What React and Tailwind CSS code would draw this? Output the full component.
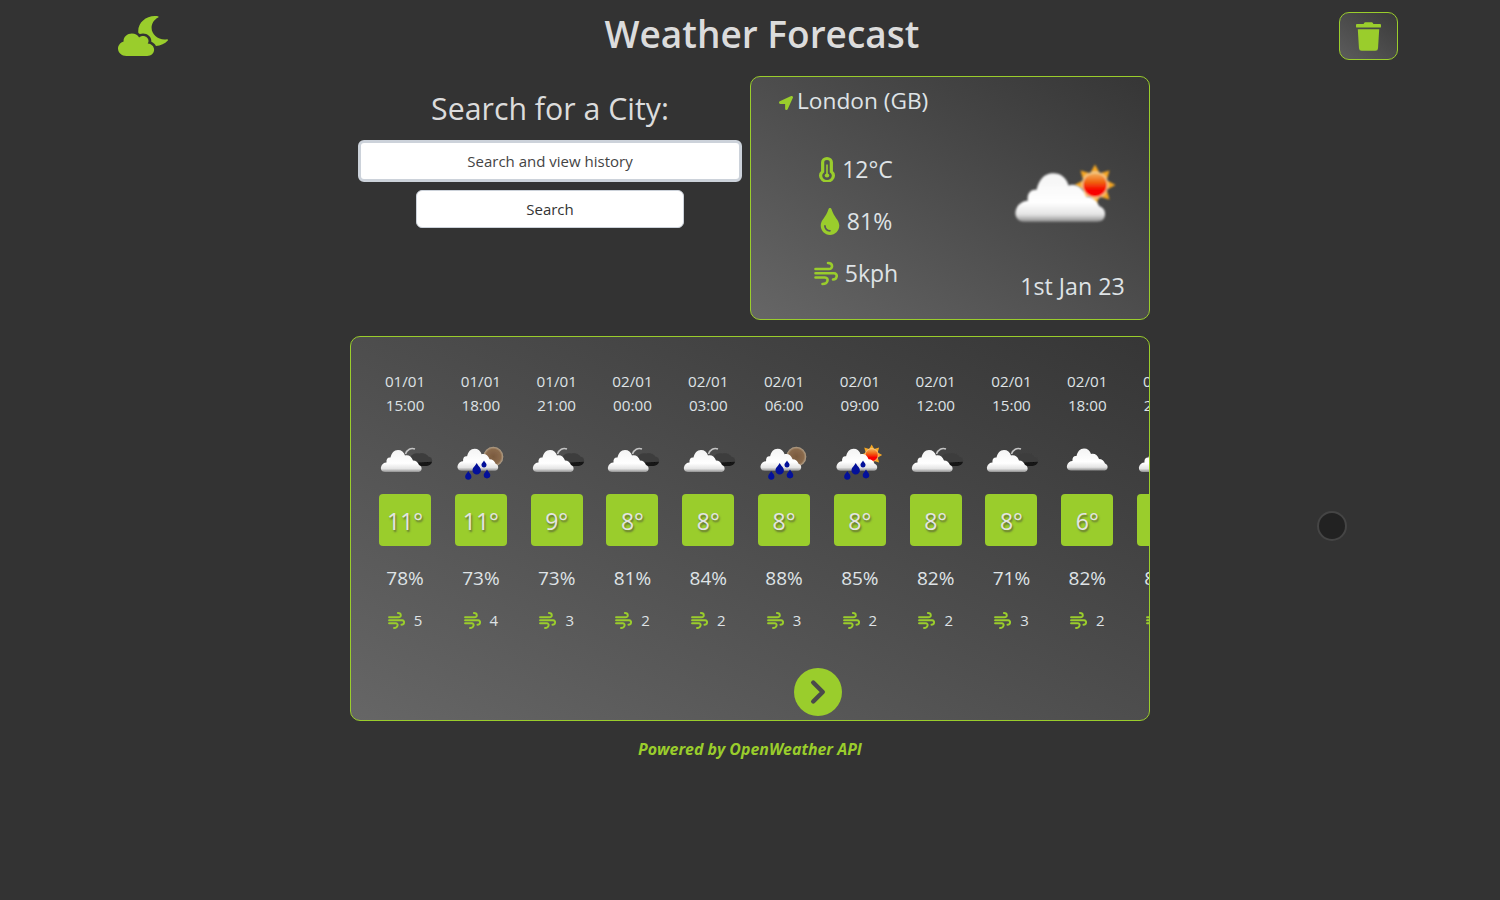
import { FaCloudMoon, FaTrash, FaLocationArrow, FaTint } from "react-icons/fa";
import { ChevronRight } from "lucide-react";

const rows = [
  ["01/01", "15:00", "night", "11°", "78%", "5"],
  ["01/01", "18:00", "rainMoon", "11°", "73%", "4"],
  ["01/01", "21:00", "night", "9°", "73%", "3"],
  ["02/01", "00:00", "night", "8°", "81%", "2"],
  ["02/01", "03:00", "night", "8°", "84%", "2"],
  ["02/01", "06:00", "rainMoon", "8°", "88%", "3"],
  ["02/01", "09:00", "rainSun", "8°", "85%", "2"],
  ["02/01", "12:00", "night", "8°", "82%", "2"],
  ["02/01", "15:00", "night", "8°", "71%", "3"],
  ["02/01", "18:00", "cloud", "6°", "82%", "2"],
  ["02/01", "21:00", "night", "6°", "83%", "2"],
];

const CLOUD =
  "M10 31 C6.5 31 5.5 28 6 26 C6.5 23.5 9 21.5 11.5 21.5 C11 18 13 16 15.5 16.5 C16.5 12 19 9 23 9 C26.5 9 29 11 30 14.5 C33 13.5 36.5 15 38 19.5 C41 19.5 43 21.5 44 24 C46 24.5 47 26.5 46.5 28.5 C46 30.5 44.5 31 42 31 Z";

function Defs() {
  return (
    <defs>
      <linearGradient id="cloudFill" x1="0" y1="0" x2="0" y2="1">
        <stop offset="0" stopColor="#f4f4f4" />
        <stop offset="0.6" stopColor="#ffffff" />
        <stop offset="0.85" stopColor="#e4e4e4" />
        <stop offset="1" stopColor="#909090" />
      </linearGradient>
      <linearGradient id="sunFill" x1="0" y1="0" x2="0" y2="1">
        <stop offset="0" stopColor="#f4b860" />
        <stop offset="0.4" stopColor="#f06010" />
        <stop offset="0.7" stopColor="#f80000" />
        <stop offset="1" stopColor="#f80000" />
      </linearGradient>
      <radialGradient id="moonFill">
        <stop offset="0" stopColor="#7a5a3e" />
        <stop offset="0.75" stopColor="#8a6a4c" />
        <stop offset="1" stopColor="#b8a68e" />
      </radialGradient>
      <filter id="soft" x="-10%" y="-10%" width="120%" height="120%">
        <feGaussianBlur stdDeviation="0.5" />
      </filter>
    </defs>
  );
}

const rays = (cx, cy, inner, outer, n) => {
  const p = [];
  for (let i = 0; i < n * 2; i++) {
    const r = i % 2 ? inner : outer;
    const a = (Math.PI * i) / n - Math.PI / 2;
    p.push(`${(cx + r * Math.cos(a)).toFixed(2)},${(cy + r * Math.sin(a)).toFixed(2)}`);
  }
  return p.join(" ");
};

function Sun({ cx, cy }) {
  return (
    <g filter="url(#soft)">
      <polygon points={rays(cx, cy, 6.5, 10.5, 8)} fill="#f5a623" />
      <circle cx={cx} cy={cy} r="6.5" fill="url(#sunFill)" stroke="#f3d9a0" strokeWidth="0.6" />
    </g>
  );
}

function Drops() {
  const d = [
    [17.3, 34.5, 1.05],
    [25.7, 28, 1.4],
    [36, 33, 1.1],
    [33, 23, 0.85],
  ];
  return d.map(([x, y, s], i) => (
    <path
      key={i}
      d={`M${x} ${y - 4.2 * s} C${x + 1 * s} ${y - 2 * s} ${x + 3 * s} ${y - 1 * s} ${x + 3 * s} ${y + 1 * s} A${3 * s} ${3 * s} 0 0 1 ${x - 3 * s} ${y + 1 * s} C${x - 3 * s} ${y - 1 * s} ${x - 1 * s} ${y - 2 * s} ${x} ${y - 4.2 * s} Z`}
      fill="#03109a"
    />
  ));
}

function WeatherIcon({ kind, className }) {
  const rain = kind === "rainMoon" || kind === "rainSun";
  return (
    <svg viewBox="0 0 60 40" className={className}>
      <Defs />
      {kind === "night" && (
        <g filter="url(#soft)">
          <path d="M30.5 13 C32 8.5 36 6.5 40 8" fill="none" stroke="#c4c4c4" strokeWidth="1.5" />
          <path d="M35 18 C35 14.5 39 11.5 44 12.5 C47 11 51.5 12.5 53.5 15.5 C56.5 16 57.5 18.5 57 21 C56.5 23.5 54 25 50 25 L40 25 C37 25 35 21.5 35 18 Z" fill="#3e3e3e" />
          <path d="M39 21.8 L57 20.8 C56.5 23.5 54 25 50 25 L41 25 Z" fill="#121212" />
        </g>
      )}
      {kind === "rainMoon" && <circle cx="42.3" cy="15.7" r="10" fill="url(#moonFill)" filter="url(#soft)" />}
      {kind === "rainSun" && <Sun cx={41.7} cy={14} />}
      <path
        d={CLOUD}
        fill="url(#cloudFill)"
        filter="url(#soft)"
        transform={kind === "cloud" ? "translate(4 -1.5)" : rain ? "translate(0.6 -1.2)" : ""}
      />
      {rain && <Drops />}
    </svg>
  );
}

function BigIcon() {
  return (
    <svg viewBox="0 0 110 62" className="w-[110px] h-[62px]">
      <Defs />
      <g transform="translate(84 22) scale(1.95)">
        <Sun cx={0} cy={0} />
      </g>
      <path d={CLOUD} transform="translate(-8.5 -9.5) scale(2.2)" fill="url(#cloudFill)" filter="url(#soft)" />
    </svg>
  );
}

function WindIcon({ className, weight = 2.8 }) {
  return (
    <svg viewBox="0 0 24 24" fill="none" stroke="currentColor" strokeWidth={weight} strokeLinecap="round" className={className}>
      <path d="M1.5 7.5 H15 C19 7.5 19.5 1.5 14 1.5" />
      <path d="M1.5 11.8 H20 C24 11.8 23.5 18 19 18" />
      <path d="M1.5 16 H11 C15 16 14.5 22.5 8.5 22.5" />
    </svg>
  );
}

function ThermoIcon({ className }) {
  return (
    <svg viewBox="0 0 14 25" preserveAspectRatio="none" fill="none" stroke="currentColor" className={className}>
      <path d="M7 1.5 a3.8 3.8 0 0 0 -3.8 3.8 v9.3 a5.6 5.6 0 1 0 7.6 0 V5.3 a3.8 3.8 0 0 0 -3.8 -3.8 z" strokeWidth="2.8" />
      <path d="M7 7.5 V18" strokeWidth="1.4" />
      <circle cx="7" cy="18.5" r="2" fill="currentColor" stroke="none" />
    </svg>
  );
}

function Column({ r }) {
  return (
    <div className="w-[75.8px] shrink-0 flex flex-col items-center text-[#dfe3e6]">
      <div className="text-[15.2px] leading-6 text-center">
        <div>{r[0]}</div>
        <div>{r[1]}</div>
      </div>
      <WeatherIcon kind={r[2]} className="w-[60px] h-[40px] mt-[24px]" />
      <div className="mt-[13px] w-[52px] h-[52px] pt-[3px] rounded-[4px] bg-[#9acd2c] flex items-center justify-center text-[23px] text-[#e4e4e4] [text-shadow:1px_2px_2px_#5f6b34]">
        {r[3]}
      </div>
      <div className="mt-[20px] h-6 leading-6 text-[19px]">{r[4]}</div>
      <div className="mt-[18px] h-6 flex items-center gap-[9px] text-[15px]">
        <WindIcon className="w-[17px] h-[17px] text-[#9acd2c]" />
        <span>{r[5]}</span>
      </div>
    </div>
  );
}

function Stat({ icon, text }) {
  return (
    <div className="h-[52px] flex items-center justify-center gap-[7px] text-[23px] text-[#dfe3e6]">
      {icon}
      <span>{text}</span>
    </div>
  );
}

export default function App() {
  return (
    <div className="relative min-h-[900px] bg-[#333333] font-['Open_Sans',sans-serif]">
      <header className="h-[76px] flex items-center pl-[118px] pr-[102px]">
        <FaCloudMoon preserveAspectRatio="none" className="w-[50px] h-[40px] text-[#9acd2c] shrink-0 -mt-[5px]" />
        <h1 className="flex-1 pl-[17px] text-center text-[37px] font-semibold text-[#dcdcdc] -mt-[8px] leading-[48px]">
          Weather Forecast
        </h1>
        <button className="w-[59px] h-[48px] -mt-[4px] rounded-[10px] border border-[#9acd2c] bg-linear-to-bl from-[#3a3a3a] to-[#5c5c5c] flex items-center justify-center">
          <FaTrash className="w-[25px] h-[29px] text-[#9acd2c]" />
        </button>
      </header>

      <main className="w-[800px] mx-auto">
        <div className="flex">
          <section className="w-[400px] flex flex-col items-center pt-[13px]">
            <h2 className="h-[40px] leading-[40px] text-[30.3px] text-[#dcdcdc]">Search for a City:</h2>
            <input
              placeholder="Search and view history"
              className="mt-[11px] w-[384px] h-[42px] rounded-[6px] border-[3px] border-[#ccd2da] bg-white text-center text-[15px] text-[#333] placeholder:text-[#444] outline-none"
            />
            <button className="mt-[8px] w-[268px] h-[38px] rounded-[6px] border border-[#ccd2da] bg-white text-[15px] text-[#333]">
              Search
            </button>
          </section>

          <section className="w-[400px] h-[244px] rounded-[10px] border border-[#9acd2c] bg-linear-to-bl from-[#363636] to-[#666666] flex flex-col">
            <div className="pl-[28px] pt-[8px] h-[50px] flex items-start gap-[4px] text-[22.7px] leading-[32px] text-[#dfe3e6]">
              <FaLocationArrow className="w-[14px] h-[14px] text-[#9acd2c] mt-[11px]" />
              <span>London (GB)</span>
            </div>
            <div className="flex">
              <div className="w-[210px] pt-[16px]">
                <Stat icon={<ThermoIcon className="w-[16px] h-[25px] text-[#9acd2c]" />} text="12°C" />
                <Stat icon={<FaTint className="w-[20px] h-[27px] text-[#9acd2c]" />} text="81%" />
                <Stat icon={<WindIcon weight={2.6} className="w-[24px] h-[25px] text-[#9acd2c]" />} text="5kph" />
              </div>
              <div className="flex-1 flex flex-col items-center pl-[22px] pt-[36px]">
                <BigIcon />
                <div className="mt-[45px] ml-[13px] text-[23.2px] leading-[32px] text-[#dfe3e6]">1st Jan 23</div>
              </div>
            </div>
          </section>
        </div>

        <section className="mt-[16px] h-[385px] rounded-[10px] border border-[#9acd2c] bg-linear-to-bl from-[#363636] to-[#666666] overflow-hidden flex flex-col">
          <div className="flex pl-[16.2px] pt-[32px] overflow-hidden">
            {rows.map((r, i) => (
              <Column key={i} r={r} />
            ))}
          </div>
          <button className="mt-[36px] ml-[443px] w-[48px] h-[48px] rounded-full bg-[#9acd2c] flex items-center justify-center">
            <ChevronRight className="w-[38px] h-[38px] text-[#4a4a4a]" strokeWidth={2.8} />
          </button>
        </section>

        <p className="mt-[16px] text-center text-[15.9px] leading-6 font-bold italic text-[#9acd2c]">
          Powered by OpenWeather API
        </p>
      </main>

      <div className="absolute left-[1317px] top-[511px] w-[30px] h-[30px] rounded-full bg-[#222222] border-[2px] border-[#454545]" />
    </div>
  );
}
